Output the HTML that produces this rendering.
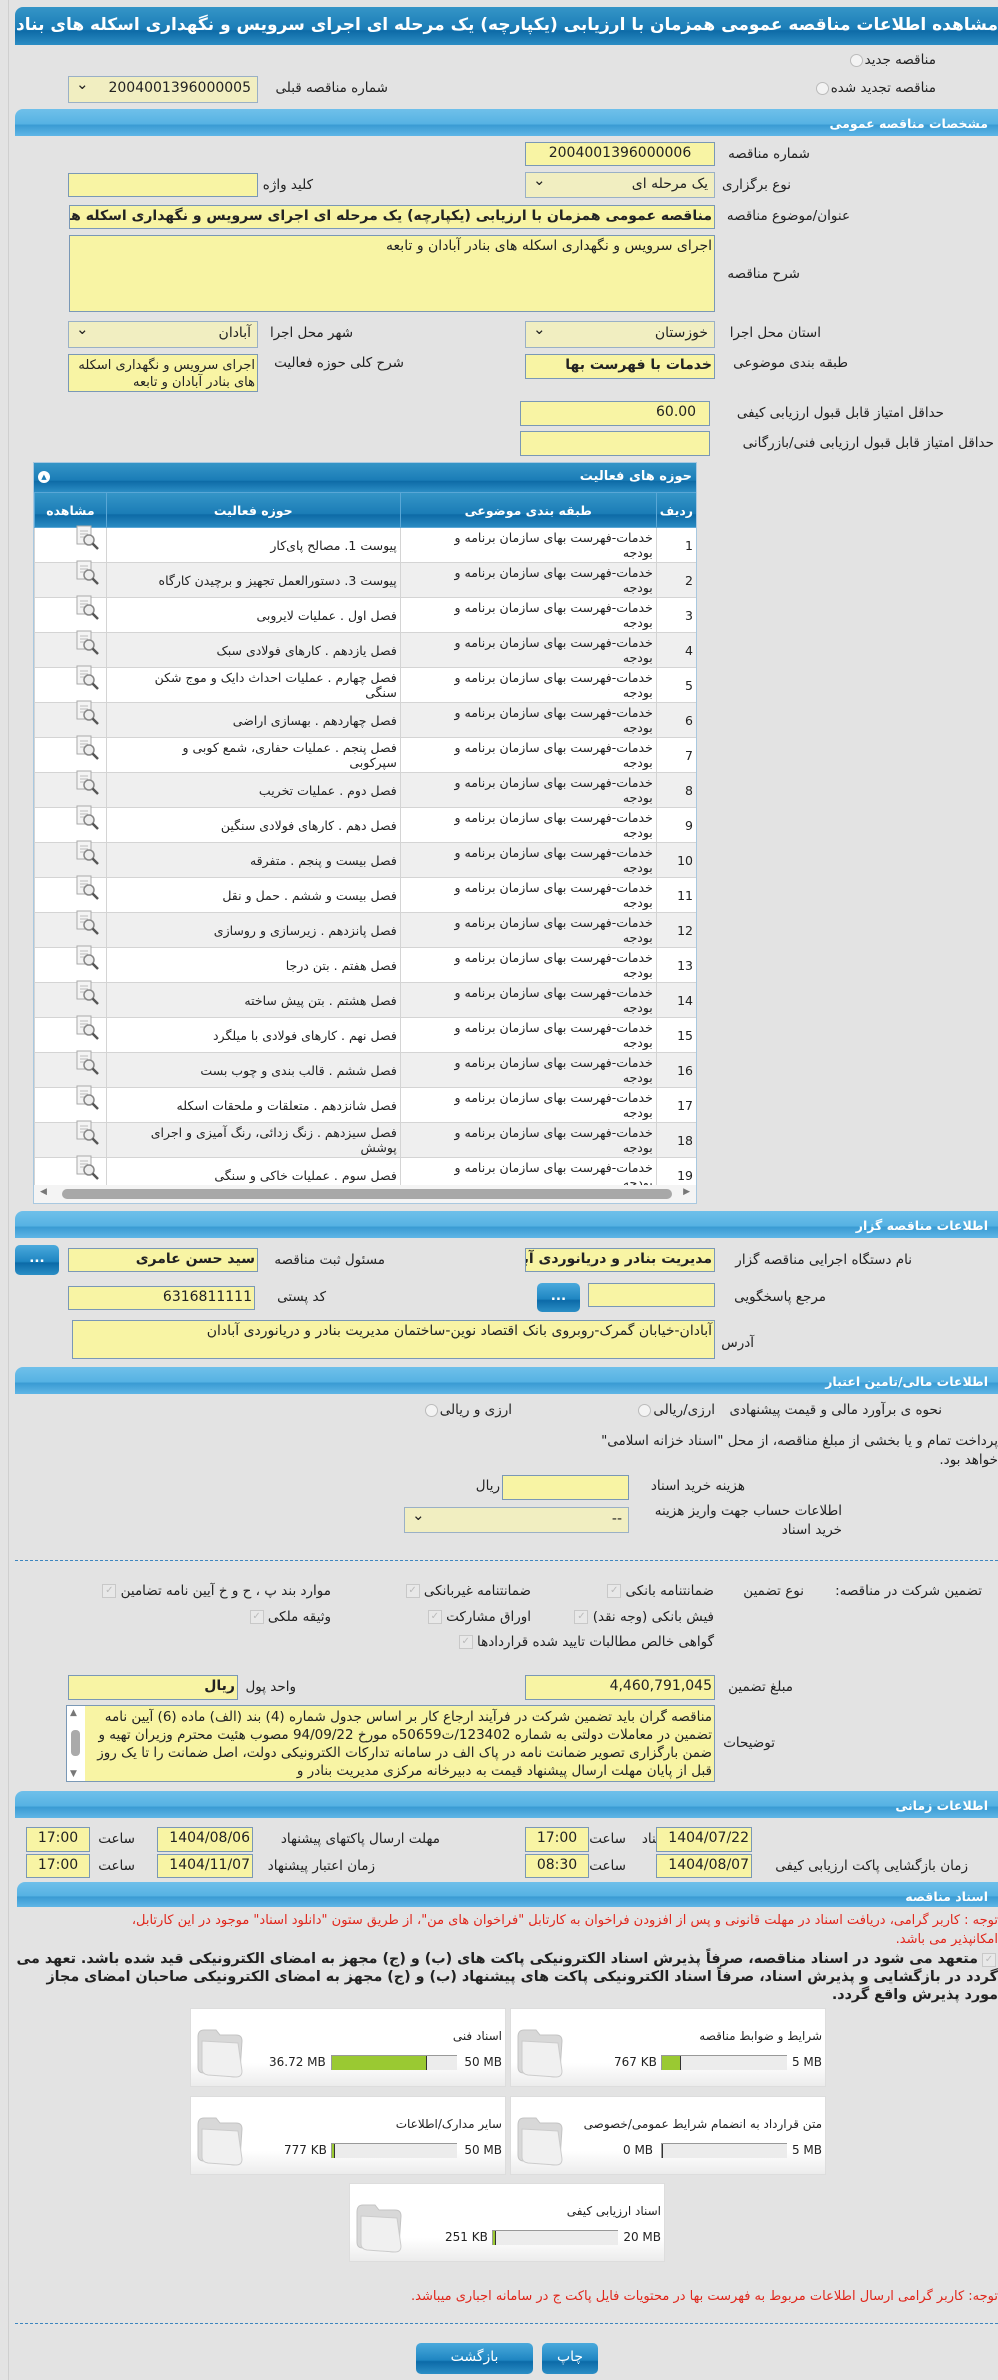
<!DOCTYPE html>
<html><head><meta charset="utf-8">
<style>
*{box-sizing:border-box;margin:0;padding:0}
body{width:998px;height:2380px;background:#e3e3e3;font-family:"DejaVu Sans","Liberation Sans",sans-serif;font-size:13.5px;color:#222;position:relative;overflow:hidden}
.a{position:absolute}
.vl{position:absolute;left:8px;top:0;width:1px;height:2380px;background:#cfcfcf}
.title{left:15px;top:7px;width:983px;height:38px;border-radius:8px 0 0 0;background:linear-gradient(#3595c7,#1a7cb6 60%,#0d6aa6 62%,#2b8dc4);color:#fff;font-weight:bold;font-size:17px;direction:rtl;text-align:right;padding:8px 0 0 0;white-space:nowrap;overflow:hidden}
.sec{left:15px;width:983px;height:27px;border-radius:8px 0 0 0;background:linear-gradient(#6fc0ea,#56b2e3 55%,#3a9bd3 60%,#5fb6e6);color:#fff;font-weight:bold;font-size:12.5px;direction:rtl;text-align:right;padding:7px 10px 0 0}
.lbl{direction:rtl;text-align:right;white-space:nowrap}
.in{position:absolute;background:#f8f4a4;border:1px solid #7a98b6;direction:rtl;text-align:right;padding:2px 2px;white-space:nowrap;overflow:hidden;font-size:14px}
.sel{position:absolute;background:#f1eec1;border:1px solid #9ab0c6;direction:rtl;text-align:right;padding:3px 6px;white-space:nowrap;overflow:hidden;font-size:14px}
.sel:after{content:"⌄";position:absolute;left:7px;top:-2px;font-size:15px}
.btn{position:absolute;border-radius:5px;background:linear-gradient(#4aa9dc,#1f86c2 55%,#0c6aa8 60%,#2b8fc6);color:#fff;text-align:center;font-weight:bold}
table{border-collapse:collapse}
.tb td{border:1px solid #d4d4d4;font-size:12.5px;direction:rtl;text-align:right;vertical-align:middle;line-height:15px;padding:0 3px;height:35px}
.chk{display:inline-block;width:14px;height:14px;border:1px solid #c8c8c8;background:#e8e8e8;color:#bbb;font-size:10px;line-height:12px;text-align:center;vertical-align:middle}
.radio{display:inline-block;width:13px;height:13px;border-radius:50%;border:1px solid #bbb;background:#f3f3f3;vertical-align:middle}
.box{position:absolute;background:linear-gradient(#fff 0,#fff 70%,#ececec);border:1px solid #ddd;width:316px;height:79px}
.box .t{position:absolute;right:3px;top:20px;direction:rtl;font-size:12px}
.bar{position:absolute;top:46px;height:15px;width:126px;background:#ececec;border-top:1px solid #999;border-left:1px solid #999}
.bar i{position:absolute;top:0;bottom:0;background:#9ac932;border-right:1px solid #333}
.box .mx{position:absolute;right:3px;top:46px;font-size:12px}
.box .cur{position:absolute;top:46px;font-size:12px}
.fold{position:absolute;left:3px;top:18px}
.dot{position:absolute;left:15px;width:983px;border-top:1px dashed #3c86c0}
.red{color:#e0261b}
</style></head><body>
<div class="vl"></div>
<div class="a title">مشاهده اطلاعات مناقصه عمومی همزمان با ارزیابی (یکپارچه) یک مرحله ای اجرای سرویس و نگهداری اسکله های بنادر آبادان و تابعه</div>

<div class="a lbl" style="right:62px;top:52px">مناقصه جدید<span class="radio" style="margin-right:2px"></span></div>
<div class="a lbl" style="right:62px;top:80px">مناقصه تجدید شده<span class="radio" style="margin-right:2px"></span></div>
<div class="a lbl" style="right:610px;top:80px">شماره مناقصه قبلی</div>
<div class="sel" style="left:68px;top:76px;width:190px;height:27px">2004001396000005</div>

<div class="a sec" style="top:109px">مشخصات مناقصه عمومی</div>
<div class="a lbl" style="right:188px;top:146px">شماره مناقصه</div>
<div class="in" style="left:525px;top:142px;width:190px;height:24px;text-align:center">2004001396000006</div>
<div class="a lbl" style="right:207px;top:177px">نوع برگزاری</div>
<div class="sel" style="left:525px;top:172px;width:190px;height:26px">یک مرحله ای</div>
<div class="a lbl" style="right:685px;top:177px">کلید واژه</div>
<div class="in" style="left:68px;top:173px;width:190px;height:24px"></div>
<div class="a lbl" style="right:148px;top:208px">عنوان/موضوع مناقصه</div>
<div class="in" style="left:69px;top:205px;width:646px;height:24px;font-weight:bold">مناقصه عمومی همزمان با ارزیابی (یکپارچه) یک مرحله ای اجرای سرویس و نگهداری اسکله های بنادر آبادان و تابعه</div>
<div class="a lbl" style="right:198px;top:266px">شرح مناقصه</div>
<div class="in" style="left:69px;top:235px;width:646px;height:77px;white-space:normal">اجرای سرویس و نگهداری اسکله های بنادر آبادان و تابعه</div>
<div class="a lbl" style="right:177px;top:325px">استان محل اجرا</div>
<div class="sel" style="left:525px;top:321px;width:190px;height:27px">خوزستان</div>
<div class="a lbl" style="right:645px;top:325px">شهر محل اجرا</div>
<div class="sel" style="left:68px;top:321px;width:190px;height:27px">آبادان</div>
<div class="a lbl" style="right:150px;top:355px">طبقه بندی موضوعی</div>
<div class="in" style="left:525px;top:354px;width:190px;height:25px;font-weight:bold">خدمات با فهرست بها</div>
<div class="a lbl" style="right:594px;top:355px">شرح کلی حوزه فعالیت</div>
<div class="in" style="left:68px;top:354px;width:190px;height:38px;white-space:normal;font-size:13px;line-height:17px">اجرای سرویس و نگهداری اسکله های بنادر آبادان و تابعه</div>
<div class="a lbl" style="right:54px;top:405px">حداقل امتیاز قابل قبول ارزیابی کیفی</div>
<div class="in" style="left:520px;top:401px;width:190px;height:25px;text-align:left;direction:ltr;padding-left:135px">60.00</div>
<div class="a lbl" style="right:4px;top:435px">حداقل امتیاز قابل قبول ارزیابی فنی/بازرگانی</div>
<div class="in" style="left:520px;top:431px;width:190px;height:25px"></div>

<!-- activities table -->
<div class="a" style="left:33px;top:462px;width:664px;height:742px;background:#fff;border:1px solid #a8c8e0;overflow:hidden">
 <div style="height:29px;background:linear-gradient(#3595c7,#1a7cb6 60%,#0d6aa6 62%,#2b8dc4);color:#fff;font-weight:bold;font-size:13px;direction:rtl;padding:6px 4px 0 0;position:relative">حوزه های فعالیت<span style="position:absolute;left:4px;top:8px;width:12px;height:12px;border-radius:50%;background:#fff;color:#1a7cb6;font-size:7px;text-align:center;line-height:12px">▲</span></div>
 <table class="tb" style="width:663px;direction:rtl">
  <tr style="background:linear-gradient(#3595c7,#1a7cb6 60%,#0d6aa6 62%,#2b8dc4);font-weight:bold"><td style="width:37px;height:28px;color:#fff;border-color:#5aa7d6">ردیف</td><td style="width:256px;text-align:center;color:#fff;border-color:#5aa7d6">طبقه بندی موضوعی</td><td style="width:294px;text-align:center;color:#fff;border-color:#5aa7d6">حوزه فعالیت</td><td style="text-align:center;color:#fff;border-color:#5aa7d6">مشاهده</td></tr>
  <tr><td>1</td><td>خدمات-فهرست بهای سازمان برنامه و<br>بودجه</td><td>پیوست 1. مصالح پای‌کار</td><td></td></tr>
  <tr style="background:#efefef"><td>2</td><td>خدمات-فهرست بهای سازمان برنامه و<br>بودجه</td><td>پیوست 3. دستورالعمل تجهیز و برچیدن کارگاه</td><td></td></tr>
  <tr><td>3</td><td>خدمات-فهرست بهای سازمان برنامه و<br>بودجه</td><td>فصل اول . عملیات لایروبی</td><td></td></tr>
  <tr style="background:#efefef"><td>4</td><td>خدمات-فهرست بهای سازمان برنامه و<br>بودجه</td><td>فصل یازدهم . کارهای فولادی سبک</td><td></td></tr>
  <tr><td>5</td><td>خدمات-فهرست بهای سازمان برنامه و<br>بودجه</td><td>فصل چهارم . عملیات احداث دایک و موج شکن<br>سنگی</td><td></td></tr>
  <tr style="background:#efefef"><td>6</td><td>خدمات-فهرست بهای سازمان برنامه و<br>بودجه</td><td>فصل چهاردهم . بهسازی اراضی</td><td></td></tr>
  <tr><td>7</td><td>خدمات-فهرست بهای سازمان برنامه و<br>بودجه</td><td>فصل پنجم . عملیات حفاری، شمع کوبی و<br>سپرکوبی</td><td></td></tr>
  <tr style="background:#efefef"><td>8</td><td>خدمات-فهرست بهای سازمان برنامه و<br>بودجه</td><td>فصل دوم . عملیات تخریب</td><td></td></tr>
  <tr><td>9</td><td>خدمات-فهرست بهای سازمان برنامه و<br>بودجه</td><td>فصل دهم . کارهای فولادی سنگین</td><td></td></tr>
  <tr style="background:#efefef"><td>10</td><td>خدمات-فهرست بهای سازمان برنامه و<br>بودجه</td><td>فصل بیست و پنجم . متفرقه</td><td></td></tr>
  <tr><td>11</td><td>خدمات-فهرست بهای سازمان برنامه و<br>بودجه</td><td>فصل بیست و ششم . حمل و نقل</td><td></td></tr>
  <tr style="background:#efefef"><td>12</td><td>خدمات-فهرست بهای سازمان برنامه و<br>بودجه</td><td>فصل پانزدهم . زیرسازی و روسازی</td><td></td></tr>
  <tr><td>13</td><td>خدمات-فهرست بهای سازمان برنامه و<br>بودجه</td><td>فصل هفتم . بتن درجا</td><td></td></tr>
  <tr style="background:#efefef"><td>14</td><td>خدمات-فهرست بهای سازمان برنامه و<br>بودجه</td><td>فصل هشتم . بتن پیش ساخته</td><td></td></tr>
  <tr><td>15</td><td>خدمات-فهرست بهای سازمان برنامه و<br>بودجه</td><td>فصل نهم . کارهای فولادی با میلگرد</td><td></td></tr>
  <tr style="background:#efefef"><td>16</td><td>خدمات-فهرست بهای سازمان برنامه و<br>بودجه</td><td>فصل ششم . قالب بندی و چوب بست</td><td></td></tr>
  <tr><td>17</td><td>خدمات-فهرست بهای سازمان برنامه و<br>بودجه</td><td>فصل شانزدهم . متعلقات و ملحقات اسکله</td><td></td></tr>
  <tr style="background:#efefef"><td>18</td><td>خدمات-فهرست بهای سازمان برنامه و<br>بودجه</td><td>فصل سیزدهم . زنگ زدائی، رنگ آمیزی و اجرای<br>پوشش</td><td></td></tr>
  <tr><td>19</td><td>خدمات-فهرست بهای سازمان برنامه و<br>بودجه</td><td>فصل سوم . عملیات خاکی و سنگی</td><td></td></tr>
 </table>
 <div style="position:absolute;left:0;right:0;bottom:0;height:18px;background:#f4f4f4"><div style="position:absolute;left:28px;right:24px;top:4px;height:10px;border-radius:5px;background:#a8a8a8"></div><span style="position:absolute;left:6px;top:2px;font-size:9px;color:#777">◀</span><span style="position:absolute;right:6px;top:2px;font-size:9px;color:#777">▶</span></div>
</div>
<svg class="a" style="left:74px;top:520px" width="36" height="665">
 <defs><g id="ic"><rect x="3" y="3" width="14" height="18" fill="#f4f4f4" stroke="#aaa"/><line x1="6" y1="8" x2="14" y2="8" stroke="#bbb"/><line x1="6" y1="11" x2="14" y2="11" stroke="#bbb"/><line x1="6" y1="14" x2="12" y2="14" stroke="#bbb"/><circle cx="15" cy="17" r="5" fill="#eee" stroke="#888" stroke-width="1.5"/><line x1="18.5" y1="20.5" x2="24" y2="26" stroke="#555" stroke-width="2.5"/></g></defs>
 <use href="#ic" y="3"/><use href="#ic" y="38"/><use href="#ic" y="73"/><use href="#ic" y="108"/><use href="#ic" y="143"/><use href="#ic" y="178"/><use href="#ic" y="213"/><use href="#ic" y="248"/><use href="#ic" y="283"/><use href="#ic" y="318"/><use href="#ic" y="353"/><use href="#ic" y="388"/><use href="#ic" y="423"/><use href="#ic" y="458"/><use href="#ic" y="493"/><use href="#ic" y="528"/><use href="#ic" y="563"/><use href="#ic" y="598"/><use href="#ic" y="633"/>
</svg>

<!-- tender org -->
<div class="a sec" style="top:1211px">اطلاعات مناقصه گزار</div>
<div class="a lbl" style="right:86px;top:1252px">نام دستگاه اجرایی مناقصه گزار</div>
<div class="in" style="left:525px;top:1248px;width:190px;height:24px;font-weight:bold">مدیریت بنادر و دریانوردی آبادان</div>
<div class="a lbl" style="right:613px;top:1252px">مسئول ثبت مناقصه</div>
<div class="in" style="left:68px;top:1248px;width:190px;height:24px;font-weight:bold">سید حسن  عامری</div>
<div class="btn" style="left:15px;top:1245px;width:44px;height:30px;line-height:26px">...</div>
<div class="a lbl" style="right:172px;top:1289px">مرجع پاسخگویی</div>
<div class="in" style="left:588px;top:1283px;width:127px;height:24px"></div>
<div class="btn" style="left:537px;top:1283px;width:43px;height:29px;line-height:26px">...</div>
<div class="a lbl" style="right:672px;top:1289px">کد پستی</div>
<div class="in" style="left:68px;top:1286px;width:187px;height:24px">6316811111</div>
<div class="a lbl" style="right:244px;top:1335px">آدرس</div>
<div class="in" style="left:72px;top:1320px;width:643px;height:39px">آبادان-خیابان گمرک-روبروی بانک اقتصاد نوین-ساختمان مدیریت بنادر و دریانوردی آبادان</div>

<!-- finance -->
<div class="a sec" style="top:1367px">اطلاعات مالی/تامین اعتبار</div>
<div class="a lbl" style="right:56px;top:1402px">نحوه ی برآورد مالی و قیمت پیشنهادی</div>
<div class="a lbl" style="right:283px;top:1402px">ارزی/ریالی<span class="radio" style="margin-right:2px"></span></div>
<div class="a lbl" style="right:486px;top:1402px">ارزی و ریالی<span class="radio" style="margin-right:2px"></span></div>
<div class="a lbl" style="right:0;top:1433px">پرداخت تمام و یا بخشی از مبلغ مناقصه، از محل "اسناد خزانه اسلامی"</div>
<div class="a lbl" style="right:0;top:1452px">خواهد بود.</div>
<div class="a lbl" style="right:253px;top:1478px">هزینه خرید اسناد</div>
<div class="in" style="left:502px;top:1475px;width:127px;height:25px"></div>
<div class="a lbl" style="right:498px;top:1478px">ریال</div>
<div class="a lbl" style="right:156px;top:1502px;line-height:19px">اطلاعات حساب جهت واریز هزینه<br>خرید اسناد</div>
<div class="sel" style="left:404px;top:1507px;width:225px;height:26px">--</div>
<div class="dot" style="top:1560px"></div>
<div class="a lbl" style="right:16px;top:1583px">تضمین شرکت در مناقصه:</div>
<div class="a lbl" style="right:194px;top:1583px">نوع تضمین</div>
<div class="a lbl" style="right:284px;top:1583px">ضمانتنامه بانکی <span class="chk">✓</span></div>
<div class="a lbl" style="right:467px;top:1583px">ضمانتنامه غیربانکی <span class="chk">✓</span></div>
<div class="a lbl" style="right:667px;top:1583px">موارد بند پ ، ح و خ آیین نامه تضامین <span class="chk">✓</span></div>
<div class="a lbl" style="right:284px;top:1609px">فیش بانکی (وجه نقد) <span class="chk">✓</span></div>
<div class="a lbl" style="right:467px;top:1609px">اوراق مشارکت <span class="chk">✓</span></div>
<div class="a lbl" style="right:667px;top:1609px">وثیقه ملکی <span class="chk">✓</span></div>
<div class="a lbl" style="right:284px;top:1634px">گواهی خالص مطالبات تایید شده قراردادها <span class="chk">✓</span></div>
<div class="a lbl" style="right:205px;top:1679px">مبلغ تضمین</div>
<div class="in" style="left:525px;top:1675px;width:190px;height:25px">4,460,791,045</div>
<div class="a lbl" style="right:702px;top:1679px">واحد پول</div>
<div class="in" style="left:68px;top:1675px;width:170px;height:25px;font-weight:bold">ریال</div>
<div class="a lbl" style="right:223px;top:1735px">توضیحات</div>
<div class="in" style="left:66px;top:1705px;width:649px;height:77px;white-space:normal;font-size:13.5px;line-height:18px;padding:2px 2px 0 20px">مناقصه گران باید تضمین شرکت در فرآیند ارجاع کار بر اساس جدول شماره (4) بند (الف) ماده (6) آیین نامه تضمین در معاملات دولتی به شماره 123402/ت50659ه مورخ 94/09/22 مصوب هئیت محترم وزیران تهیه و ضمن بارگزاری تصویر ضمانت نامه در پاک الف در سامانه تدارکات الکترونیکی دولت، اصل ضمانت را تا یک روز قبل از پایان مهلت ارسال پیشنهاد قیمت به دبیرخانه مرکزی مدیریت بنادر و</div>
<div class="a" style="left:67px;top:1706px;width:18px;height:75px;background:#fff"><div style="position:absolute;left:4px;top:24px;width:9px;height:26px;border-radius:4px;background:#aaa"></div><span style="position:absolute;left:3px;top:2px;font-size:9px;color:#777">▲</span><span style="position:absolute;left:3px;bottom:2px;font-size:9px;color:#777">▼</span></div>

<!-- time -->
<div class="a sec" style="top:1791px">اطلاعات زمانی</div>
<div class="a lbl" style="right:247px;top:1831px">مهلت دریافت اسناد</div>
<div class="in" style="left:656px;top:1827px;width:96px;height:25px">1404/07/22</div>
<div class="a lbl" style="right:372px;top:1831px">ساعت</div>
<div class="in" style="left:525px;top:1827px;width:64px;height:25px;text-align:center">17:00</div>
<div class="a lbl" style="right:558px;top:1831px">مهلت ارسال پاکتهای پیشنهاد</div>
<div class="in" style="left:157px;top:1827px;width:96px;height:25px">1404/08/06</div>
<div class="a lbl" style="right:863px;top:1831px">ساعت</div>
<div class="in" style="left:26px;top:1827px;width:64px;height:25px;text-align:center">17:00</div>
<div class="a lbl" style="right:30px;top:1858px">زمان بازگشایی پاکت ارزیابی کیفی</div>
<div class="in" style="left:656px;top:1854px;width:96px;height:24px">1404/08/07</div>
<div class="a lbl" style="right:372px;top:1858px">ساعت</div>
<div class="in" style="left:525px;top:1854px;width:64px;height:24px;text-align:center">08:30</div>
<div class="a lbl" style="right:623px;top:1858px">زمان اعتبار پیشنهاد</div>
<div class="in" style="left:157px;top:1854px;width:96px;height:24px">1404/11/07</div>
<div class="a lbl" style="right:863px;top:1858px">ساعت</div>
<div class="in" style="left:26px;top:1854px;width:64px;height:24px;text-align:center">17:00</div>

<!-- documents -->
<div class="a sec" style="top:1882px;left:17px;width:981px;height:25px">اسناد مناقصه</div>
<div class="a lbl red" style="right:0;top:1911px;line-height:19px;font-size:13px">توجه : کاربر گرامی، دریافت اسناد در مهلت قانونی و پس از افزودن فراخوان به کارتابل "فراخوان های من"، از طریق ستون "دانلود اسناد" موجود در این کارتابل،<br>امکانپذیر می باشد.</div>
<div class="a" style="right:0;top:1950px;width:985px;direction:rtl;text-align:right;font-weight:bold;font-size:14.3px;line-height:18px;text-indent:20px">متعهد می شود در اسناد مناقصه، صرفاً پذیرش اسناد الکترونیکی پاکت های (ب) و (ج) مجهز به امضای الکترونیکی قید شده باشد. تعهد می گردد در بازگشایی و پذیرش اسناد، صرفاً اسناد الکترونیکی پاکت های پیشنهاد (ب) و (ج) مجهز به امضای الکترونیکی صاحبان امضای مجاز مورد پذیرش واقع گردد.</div>
<span class="a chk" style="right:2px;top:1953px;width:14px;height:14px">✓</span>

<svg width="0" height="0" style="position:absolute"><defs><g id="fd"><path d="M4 10 L4 40 Q4 46 10 46 L40 50 Q46 50 46 44 L48 14 Q48 8 42 8 L26 8 L22 3 L10 3 Q4 3 4 10Z" fill="#d8d8d8" stroke="#c4c4c4"/><path d="M8 14 L44 16 L48 44 Q48 50 42 50 L14 48 Q8 47 8 42Z" fill="#f0f0f0" stroke="#ccc"/></g></defs></svg>

<div class="box" style="left:510px;top:2008px"><div class="t">شرایط و ضوابط مناقصه</div><svg class="fold" width="52" height="54"><use href="#fd"/></svg><div class="mx">5 MB</div><div class="bar" style="left:150px"><i style="left:0;width:19px"></i></div><div class="cur" style="left:103px">767 KB</div></div>
<div class="box" style="left:190px;top:2008px"><div class="t">اسناد فنی</div><svg class="fold" width="52" height="54"><use href="#fd"/></svg><div class="mx">50 MB</div><div class="bar" style="left:140px"><i style="left:0;width:95px"></i></div><div class="cur" style="left:78px">36.72 MB</div></div>
<div class="box" style="left:510px;top:2096px"><div class="t">متن قرارداد به انضمام شرایط عمومی/خصوصی</div><svg class="fold" width="52" height="54"><use href="#fd"/></svg><div class="mx">5 MB</div><div class="bar" style="left:150px"><i style="left:0;width:1px"></i></div><div class="cur" style="left:112px">0 MB</div></div>
<div class="box" style="left:190px;top:2096px"><div class="t">سایر مدارک/اطلاعات</div><svg class="fold" width="52" height="54"><use href="#fd"/></svg><div class="mx">50 MB</div><div class="bar" style="left:140px"><i style="left:0;width:3px"></i></div><div class="cur" style="left:93px">777 KB</div></div>
<div class="box" style="left:349px;top:2183px"><div class="t">اسناد ارزیابی کیفی</div><svg class="fold" width="52" height="54"><use href="#fd"/></svg><div class="mx">20 MB</div><div class="bar" style="left:142px"><i style="left:0;width:3px"></i></div><div class="cur" style="left:95px">251 KB</div></div>

<div class="a lbl red" style="right:0;top:2289px;font-size:13px">توجه: کاربر گرامی ارسال اطلاعات مربوط به فهرست بها در محتویات فایل پاکت ج در سامانه اجباری میباشد.</div>
<div class="dot" style="top:2323px"></div>
<div class="btn" style="left:416px;top:2343px;width:117px;height:31px;line-height:29px;font-weight:normal;font-size:14px">بازگشت</div>
<div class="btn" style="left:542px;top:2343px;width:56px;height:31px;line-height:29px;font-weight:normal;font-size:14px">چاپ</div>
</body></html>
